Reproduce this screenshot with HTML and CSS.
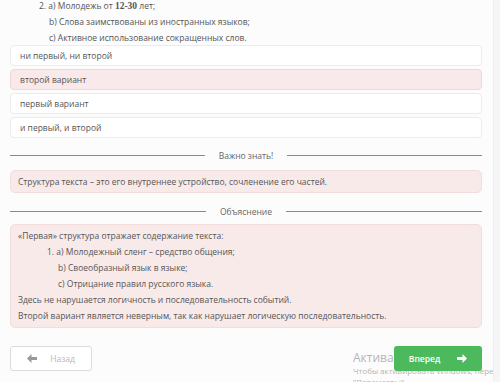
FILE: index.html
```html
<!DOCTYPE html>
<html lang="ru">
<head>
  <meta charset="UTF-8">
  <title>Тест</title>
  <link rel="stylesheet" href="styles.css">
</head>
<body>

<div class="page">
  <div class="question">
    <p class="q-line lvl1">2. а) Молодежь от <b>12-30</b> лет;</p>
    <p class="q-line lvl2">b) Слова заимствованы из иностранных языков;</p>
    <p class="q-line lvl2">c) Активное использование сокращенных слов.</p>
  </div>

  <div class="options">
    <div class="option">ни первый, ни второй</div>
    <div class="option wrong">второй вариант</div>
    <div class="option">первый вариант</div>
    <div class="option">и первый, и второй</div>
  </div>

  <div class="divider"><span>Важно знать!</span></div>
  <div class="note fact">Структура текста – это его внутреннее устройство, сочленение его частей.</div>

  <div class="divider"><span>Объяснение</span></div>
  <div class="note explain">
    <p>«Первая» структура отражает содержание текста:</p>
    <p class="lvl1">1. а) Молодежный сленг – средство общения;</p>
    <p class="lvl2">b) Своеобразный язык в языке;</p>
    <p class="lvl2">c) Отрицание правил русского языка.</p>
    <p>Здесь не нарушается логичность и последовательность событий.</p>
    <p>Второй вариант является неверным, так как нарушает логическую последовательность.</p>
  </div>

  <div class="nav">
    <button type="button" class="btn back">
      <svg width="10" height="9" viewBox="0 0 10 9"><path d="M0 4.5 L4.5 0 V3 H10 V6 H4.5 V9 Z" fill="currentColor"/></svg>
      Назад
    </button>
    <button type="button" class="btn next">
      Вперед
      <svg width="10" height="9" viewBox="0 0 10 9"><path d="M10 4.5 L5.5 0 V3 H0 V6 H5.5 V9 Z" fill="currentColor"/></svg>
    </button>
  </div>

  <div class="watermark">
    <div class="wm-title">Активация Windows</div>
    <div class="wm-text">Чтобы активировать Windows, перейдите в раздел<br>"Параметры".</div>
  </div>
</div>

</body>
</html>
```

FILE: styles.css
```css
* {
  margin: 0;
  padding: 0;
  box-sizing: border-box;
}

html, body {
  height: 100%;
  overflow: hidden;
}

body {
  font-family: 'Open Sans', sans-serif;
  font-size: 8.5px;
  color: #555;
  background: #f4f5f7;
}

.page {
  width: 494px;
  height: 100%;
  background: #fcfcfc;
  border-right: 1px solid #eceef1;
  padding: 0 11px 0 10px;
  position: relative;
  overflow: hidden;
}

.q-line {
  line-height: 16px;
  height: 16px;
}

.q-line:first-child {
  margin-top: -2px;
}

.lvl1 {
  padding-left: 29px;
}

.lvl2 {
  padding-left: 39px;
}

.q-line b {
  font-family: 'Liberation Serif', serif;
  font-size: 9.5px;
}

.options {
  display: flex;
  flex-direction: column;
  gap: 3px;
  margin-top: -1px;
}

.option {
  height: 21px;
  line-height: 19px;
  padding: 0 9px;
  background: #fff;
  border: 1px solid #ececec;
  border-radius: 4px;
}

.option.wrong {
  background: #fae9ea;
  border-color: #f1d5d7;
}

.divider {
  display: flex;
  align-items: center;
  gap: 14px;
  margin-top: 10px;
  height: 14px;
}

.divider::before,
.divider::after {
  content: "";
  flex: 1;
  height: 1px;
  background: #8a8a8a;
}

.divider span {
  color: #666;
}

.note {
  margin-top: 8px;
  background: #f9eaea;
  border: 1px solid #f2dcdc;
  border-radius: 5px;
  padding: 4px 7px;
  line-height: 13px;
}

.note + .divider {
  margin-top: 11px;
}

.explain {
  margin-top: 6px;
  padding: 3px 7px 3px;
}

.explain p {
  line-height: 16px;
}

.explain .lvl1 {
  padding-left: 29px;
}

.explain .lvl2 {
  padding-left: 40px;
}

.nav {
  display: flex;
  justify-content: space-between;
  margin-top: 18px;
}

.btn {
  display: flex;
  flex-shrink: 0;
  align-items: center;
  justify-content: center;
  gap: 13px;
  height: 25px;
  font-family: 'Open Sans', sans-serif;
  font-size: 8.5px;
  border-radius: 3px;
  position: relative;
  z-index: 1;
}

.btn.back {
  width: 82px;
  background: #fff;
  border: 1px solid #dcdcdc;
  color: #b8b8b8;
}

.btn.back svg {
  color: #999;
}

.btn.next {
  width: 88px;
  background: #4cba5c;
  border: none;
  color: #fff;
  font-weight: 600;
  gap: 17px;
}

.watermark {
  position: absolute;
  left: 353px;
  top: 350px;
  color: #b5b5b5;
  z-index: 0;
  white-space: nowrap;
}

.wm-title {
  font-size: 12px;
  line-height: 15px;
}

.wm-text {
  font-size: 8px;
  line-height: 11px;
}
```
